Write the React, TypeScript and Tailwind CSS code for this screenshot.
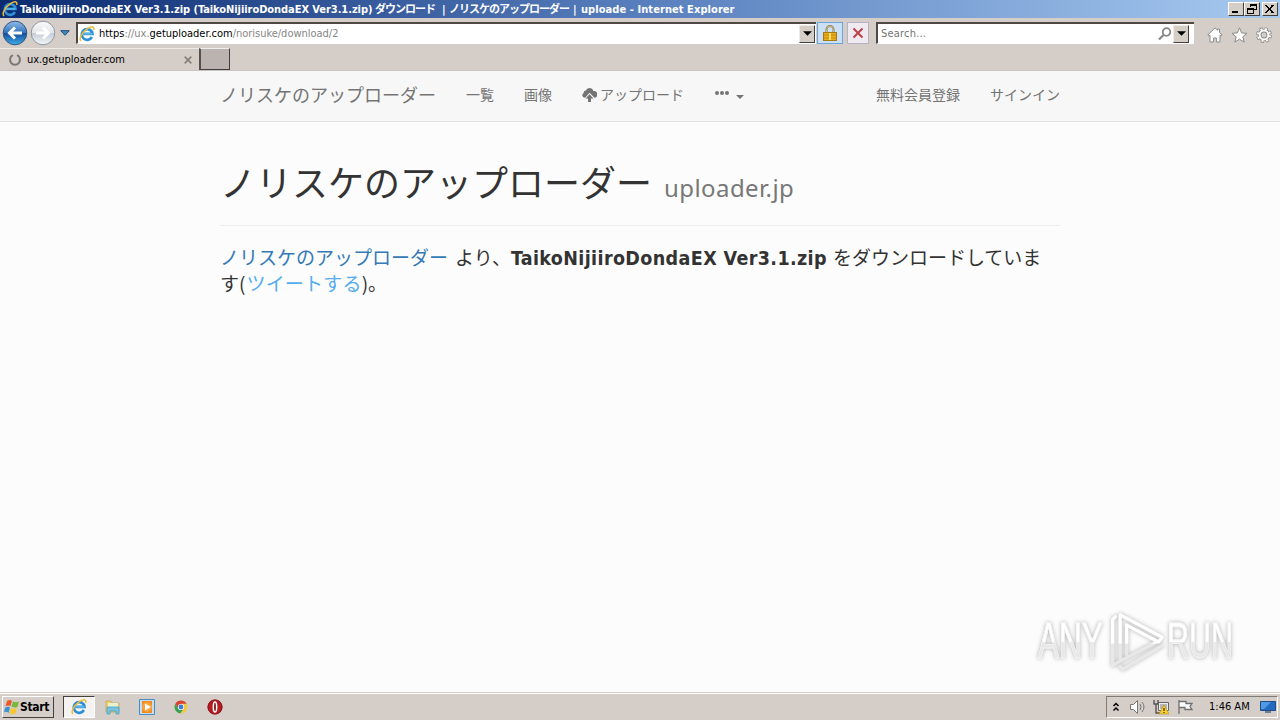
import type { ReactNode } from "react";

const UI = "font-['DejaVu_Sans_Condensed','DejaVu_Sans','Noto_Sans_CJK_JP',sans-serif] [font-stretch:condensed]";
const JP = "font-['Noto_Sans_CJK_JP',sans-serif]";

function IeLogo({ className }: { className: string }) {
  return (
    <svg viewBox="0 0 16 16" className={className}>
      <path d="M12.9 11a5.4 5.4 0 1 1 .6-3.1H4.2" fill="none" stroke="#2d8fd5" strokeWidth="2.7" />
      <path d="M4.2 7.9h9.2" stroke="#68c4f2" strokeWidth="1.2" />
      <path d="M2.2 14.8C-.8 13.3 3 6.7 7.8 3.2 12-.1 15.8-.1 14.6 4" fill="none" stroke="#eebc30" strokeWidth="1.5" />
    </svg>
  );
}

function Arrow({ className }: { className: string }) {
  return (
    <svg viewBox="0 0 8 4" className={className}>
      <path d="M0 0h8L4 4z" fill="currentColor" />
    </svg>
  );
}

function DropButton({ className }: { className: string }) {
  return (
    <span className={`flex items-center justify-center border border-t-[#eeeae4] border-l-[#eeeae4] border-r-[#44403d] border-b-[#44403d] bg-[#d5cec7] text-black ${className}`}>
      <Arrow className="h-[5px] w-[9px]" />
    </span>
  );
}

function WindowButton({ children, className = "" }: { children: ReactNode; className?: string }) {
  return (
    <span className={`flex h-[14px] w-4 items-center justify-center border border-t-white border-l-white border-r-[#404040] border-b-[#404040] bg-[#d5cec7] ${className}`}>
      <svg viewBox="0 0 12 10" className="h-[10px] w-3" fill="none" stroke="#000" shapeRendering="crispEdges">
        {children}
      </svg>
    </span>
  );
}

function TitleBar() {
  return (
    <header className={`flex h-[18px] shrink-0 items-center bg-linear-to-r from-[#0c2a70] via-[#587fbd] to-[#a7caf0] pl-[2px] text-[11px] font-bold leading-[18px] whitespace-pre text-white ${UI}`}>
      <IeLogo className="mr-[2px] h-4 w-4 shrink-0" />
      <span className="w-[355px] shrink-0 pt-[2px] tracking-[-0.06px]">TaikoNijiiroDondaEX Ver3.1.zip (TaikoNijiiroDondaEX Ver3.1.zip)</span>
      <span className="w-[67px] shrink-0 pt-[2px] tracking-[-1px]">ダウンロード</span>
      <span className="w-[7px] shrink-0 pt-px">|</span>
      <span className="w-[124px] shrink-0 pt-[2px] tracking-[-1px]">ノリスケのアップローダー</span>
      <span className="w-[8px] shrink-0 pt-px">|</span>
      <span className="shrink-0 pt-[2px] tracking-[0.07px]">uploade - Internet Explorer</span>
      <span className="ml-auto flex pr-[2px]">
        <WindowButton><path d="M2 8h6" strokeWidth="2" /></WindowButton>
        <WindowButton className="mr-[2px]">
          <path d="M4.500 3V.5h6v5H8M4 1.500h7M1.500 4.500h6v5h-6zM1 5.500h7" />
        </WindowButton>
        <WindowButton><path d="M2 1l7 8M9 1L2 9" strokeWidth="1.6" /></WindowButton>
      </span>
    </header>
  );
}

function NavCircle({ forward = false }: { forward?: boolean }) {
  return (
    <svg viewBox="0 0 26 26" className="h-[26px] w-[26px]">
      <defs>
        <linearGradient id={forward ? "fwd" : "back"} x2="0" y2="1">
          <stop stopColor={forward ? "#fafafa" : "#92bde9"} />
          <stop offset=".48" stopColor={forward ? "#e4e6ea" : "#3474bd"} />
          <stop offset=".5" stopColor={forward ? "#c3cad4" : "#134a96"} />
          <stop offset="1" stopColor={forward ? "#f4f8fb" : "#3faeea"} />
        </linearGradient>
      </defs>
      <circle cx="13" cy="13" r="11.800" fill={forward ? "url(#fwd)" : "url(#back)"} stroke={forward ? "#8e959f" : "#34537e"} />
      <path
        d={forward ? "M6 13h12M13 7.500l5.500 5.500-5.500 5.500" : "M20 13H8M13 7.500L7.500 13l5.500 5.500"}
        fill="none" stroke="#fff" strokeWidth="3"
      />
    </svg>
  );
}

function AddressBar() {
  return (
    <div className={`flex h-[30px] shrink-0 items-start bg-[#d5cec8] pt-1 pl-[2px] text-[11px] ${UI}`}>
      <div className="-mt-[2px] flex items-center">
        <NavCircle />
        <span className="ml-[2px] flex"><NavCircle forward /></span>
        <svg viewBox="0 0 10 6" className="ml-1 h-[6px] w-[10px]">
          <path d="M.7.7h8.600L5 5.300z" fill="#3c88c4" stroke="#244c75" />
        </svg>
      </div>
      <div className="ml-[6px] flex h-[22px] w-[740px] items-center border-t-2 border-b border-l-2 border-[#504845] border-b-white bg-white">
        <IeLogo className="ml-px h-4 w-4" />
        <span className="ml-1 pt-[2px] tracking-[-0.02px] text-[#858585]">
          <span className="text-black">https</span>://ux.<span className="text-black">getuploader.com</span>/norisuke/download/2
        </span>
        <DropButton className="mr-px ml-auto h-[18px] w-4" />
      </div>
      <span className="ml-px flex h-[22px] w-[26px] items-center justify-center border border-[#6aa5dc] bg-[#c9e0f7]">
        <svg viewBox="0 0 14 16" className="h-4 w-[14px]">
          <path d="M3.500 8V4.500a3.500 3.500 0 0 1 7 0V8" fill="none" stroke="#8b7850" strokeWidth="2" />
          <path d="M3.500 8V4.500a3.500 3.500 0 0 1 7 0V8" fill="none" stroke="#e6d599" strokeWidth=".7" />
          <rect x=".5" y="7.500" width="13" height="8" fill="#e9ae18" stroke="#a57818" />
          <path d="M1 10h12M1 13h12" stroke="#c98909" />
          <path d="M7 8v7" stroke="#f8de6c" strokeWidth="2" />
        </svg>
      </span>
      <span className="ml-1 flex h-[22px] w-[22px] items-center justify-center border border-[#b4b3c3] bg-[#eeeaf0]">
        <svg viewBox="0 0 12 12" className="h-3 w-3"><path d="M1.500 1.500l9 9M10.500 1.500l-9 9" stroke="#be4148" strokeWidth="2" /></svg>
      </span>
      <div className="ml-[7px] flex h-[22px] w-[318px] items-center border-t-2 border-b border-l-2 border-[#504845] border-b-white bg-white pr-[5px] text-[#747474]">
        <span className="ml-[3px] pt-[2px] tracking-[0.2px]">Search...</span>
        <svg viewBox="0 0 14 14" className="ml-auto mr-px h-[14px] w-[14px]" fill="none" stroke="#858585">
          <circle cx="8.500" cy="5" r="3.800" strokeWidth="1.800" /><path d="M5.500 8L1 12.500" strokeWidth="2.200" />
        </svg>
        <DropButton className="h-[18px] w-4" />
      </div>
      <div className="mt-[5px] ml-[13px] flex gap-2">
        <svg viewBox="0 0 16 16" className="h-4 w-4"><path d="M8 .8L.8 8l1.200 1.200L3 8.300V15h3.600v-4h2.800v4H13V8.300l1 .9L15.200 8 12.500 5.300V2h-2v1.300z" fill="#fff" stroke="#8b8b8b" /></svg>
        <svg viewBox="0 0 17 16" className="h-4 w-[17px]"><path d="M8.500.8l2.100 5.100 5.400.4-4.200 3.500 1.400 5.300-4.700-2.900-4.700 2.900 1.400-5.300L1 6.300l5.400-.4z" fill="#fff" stroke="#8b8b8b" /></svg>
        <svg viewBox="0 0 16 16" className="h-4 w-4" fill="none">
          <circle cx="8" cy="8" r="6.400" stroke="#858585" strokeWidth="3" strokeDasharray="2.900 2.127" />
          <circle cx="8" cy="8" r="4.400" stroke="#858585" strokeWidth="3.800" />
          <circle cx="8" cy="8" r="6.100" stroke="#fff" strokeWidth="2" strokeDasharray="1.900 2.891" strokeDashoffset="-.4" />
          <circle cx="8" cy="8" r="4.400" stroke="#fff" strokeWidth="2" />
        </svg>
      </div>
    </div>
  );
}

function TabBar() {
  return (
    <div className={`flex h-[23px] shrink-0 items-start border-b border-[#c9c6c2] bg-[#d5cec8] text-[11px] ${UI}`}>
      <div className="flex h-[22px] w-[199px] items-center border-t border-[#eeeae7] pl-2">
        <svg viewBox="0 0 14 14" className="h-[14px] w-[14px]"><path d="M5 2.200A5 5 0 1 0 9 2.200" fill="none" stroke="#777" strokeWidth="2" /></svg>
        <span className="ml-[5px] pt-[2px] tracking-[-0.05px]">ux.getuploader.com</span>
        <svg viewBox="0 0 8 8" className="mr-[7px] ml-auto h-2 w-2"><path d="M.7.7l6.600 6.600M7.300.7L.7 7.300" stroke="#85807c" strokeWidth="1.700" /></svg>
      </div>
      <div className="h-[22px] w-[31px] border border-t-[#eee] border-l-2 border-l-[#55504d] border-r-[#413d3a] border-b-[#413d3a] bg-[#bbb3af]" />
    </div>
  );
}

function SiteNav() {
  return (
    <nav className={`h-[51px] shrink-0 border-b border-[#e2e2e2] bg-[#f7f7f7] text-[14px] text-[#747474] ${JP}`}>
      <div className="mx-auto flex h-[46px] w-[840px] items-center leading-5">
        <a className="w-[246px] text-[18px]">ノリスケのアップローダー</a>
        <a className="w-[58px]">一覧</a>
        <a className="w-[58px]">画像</a>
        <a className="flex w-[133px] items-center">
          <svg viewBox="0 0 15 14" className="mt-px mr-[3px] h-[14px] w-[15px]" fill="currentColor">
            <path d="M3 9.800A2.500 2.500 0 0 1 1.500 5.200 2.700 2.700 0 0 1 3.800 2.600 4 4 0 0 1 11.400 3.100 3 3 0 0 1 12.500 9.800L7.500 4.800 3.300 9.500z" />
            <path d="M7.500 6.300l4 4.200H9V14H6v-3.500H3.500z" />
          </svg>
          アップロード
        </a>
        <a className="flex items-center">
          <svg viewBox="0 0 14 4" className="mb-[2px] h-1 w-[14px]" fill="currentColor">
            <circle cx="2" cy="2" r="2" /><circle cx="7" cy="2" r="2" /><circle cx="12" cy="2" r="2" />
          </svg>
          <Arrow className="mt-[5px] ml-[7px] h-1 w-2" />
        </a>
        <a className="ml-auto">無料会員登録</a>
        <a className="ml-[30px]">サインイン</a>
      </div>
    </nav>
  );
}

function Watermark() {
  return (
    <div className="absolute top-[536px] left-[1038px] flex h-[68px] w-[200px] items-center font-['Liberation_Sans_Narrow','Liberation_Sans',sans-serif] text-[50px] leading-[68px] drop-shadow-[0_0_2px_rgba(0,0,0,0.3)]">
      <span className="mr-[-34px] w-[104px] shrink-0 origin-left scale-x-[0.63] bg-linear-to-b from-white from-52% to-[#e8e8e8] to-52% bg-clip-text text-transparent [-webkit-text-stroke:0.8px_#f4f4f4]">ANY</span>
      <svg viewBox="0 0 62 68" className="h-[68px] w-[58px] shrink-0" fill="none" strokeWidth="3.500" strokeLinejoin="round" strokeLinecap="round">
        <defs><linearGradient id="mark" x2="0" y2="1"><stop offset=".52" stopColor="#fff" /><stop offset=".54" stopColor="#e8e8e8" /></linearGradient></defs>
        <path d="M13 53V6l45 24-4 5-34-18M8 8L5 11v49l7-4 42-22M20 17v32M13 61l3 3 42-25" stroke="url(#mark)" />
      </svg>
      <span className="ml-px w-[112px] shrink-0 origin-left scale-x-[0.61] bg-linear-to-b from-white from-52% to-[#e8e8e8] to-52% bg-clip-text text-transparent [-webkit-text-stroke:0.8px_#f4f4f4]">RUN</span>
    </div>
  );
}

function Content() {
  return (
    <main className="relative flex min-h-0 flex-1 flex-col bg-[#fcfcfc]">
      <SiteNav />
      <div className={`mx-auto w-[840px] text-[#333] ${JP}`}>
        <h1 className="flex h-[104px] items-baseline border-b border-[#eeeeee] pt-[37px] text-[36px] leading-[44px] whitespace-nowrap">
          ノリスケのアップローダー
          <small className="ml-3 font-['Noto_Sans','Open_Sans',sans-serif] text-[24px] tracking-[0.43px] text-[#777]">uploader.jp</small>
        </h1>
        <p className="mt-[18px] text-[19px] leading-[26px] whitespace-nowrap">
          <a className="text-[#337ab7]">ノリスケのアップローダー</a>
          <span className="ml-[7px]">より、</span>
          <b className="font-['DejaVu_Sans_Condensed','DejaVu_Sans',sans-serif] text-[19.500px] leading-none font-bold tracking-[0.380px] [font-stretch:condensed]">TaikoNijiiroDondaEX Ver3.1.zip</b>
          <span className="ml-[6px]">をダウンロードしていま</span>
          <br />
          す<span className="mr-px">(</span><a className="tracking-[0.2px] text-[#55acee]">ツイートする</a>)。
        </p>
      </div>
      <Watermark />
    </main>
  );
}

function Taskbar() {
  return (
    <footer className={`flex h-[28px] shrink-0 items-center border-t border-[#d5cec8] bg-[#d5cec8] pl-[2px] text-[11px] shadow-[inset_0_1px_0_#fff] ${UI}`}>
      <button className="flex h-[22px] w-[52px] items-center border border-t-white border-l-white border-r-[#44403d] border-b-[#44403d] pl-px text-[12px] font-bold tracking-[-0.3px]">
        <svg viewBox="0 0 16 16" className="h-4 w-4 shrink-0">
          <path d="M3 2q3-2 5 0L6.500 7q-3-1-5 .5z" fill="#e75b2c" />
          <path d="M9 2.500q3 1.500 6 0L13.500 8q-3 1-6-.5z" fill="#75b83b" />
          <path d="M1 9q3-2 5-.500L4.500 14q-2-2-4.500-.5z" fill="#3c91d5" />
          <path d="M7 9q3 1.500 6 0L11.500 14.500q-3 1-6-.500z" fill="#f8c72e" />
        </svg>
        Start
      </button>
      <span className="ml-[9px] flex h-[22px] w-[32px] items-center justify-center border border-t-[#44403d] border-l-[#44403d] border-r-white border-b-white bg-[#f5f3f2]"><IeLogo className="h-4 w-4" /></span>
      <svg viewBox="0 0 16 16" className="ml-[10px] h-4 w-4">
        <path d="M1 2h5l1 2h7v9H1z" fill="#edcf72" stroke="#c7a34c" strokeWidth=".7" />
        <path d="M3 4h10v4H3z" fill="#e8f2d1" /><path d="M2 8h12v7h-3v-3H5v3H2z" fill="#79c3dc" stroke="#3b9fc5" strokeWidth=".7" />
      </svg>
      <svg viewBox="0 0 16 16" className="ml-[18px] h-4 w-4">
        <path d="M.5.5h15v15H.5z" fill="#c6def0" stroke="#458dc4" /><path d="M3 2h10v12H3z" fill="#ef8920" />
        <circle cx="8" cy="8" r="5" fill="#f7a33b" /><path d="M6 4.500L12 8l-6 3.500z" fill="#fff" />
      </svg>
      <svg viewBox="0 0 16 16" className="ml-[18px] h-4 w-4">
        <circle cx="8" cy="8" r="6.500" fill="#f6c742" />
        <path d="M2.400 4.700A6.500 6.500 0 0 1 13.600 4.700H8L5.200 9.700z" fill="#d84335" />
        <path d="M2.400 4.700A6.500 6.500 0 0 0 7.200 14.450L10.700 9.700H5.200z" fill="#35a358" />
        <circle cx="8" cy="8" r="3.100" fill="#fff" /><circle cx="8" cy="8" r="2.400" fill="#3c7bd9" />
      </svg>
      <svg viewBox="0 0 16 16" className="ml-[18px] h-4 w-4">
        <circle cx="8" cy="8" r="7.500" fill="#b91920" /><circle cx="8" cy="8" r="7" fill="none" stroke="#861820" />
        <ellipse cx="8" cy="8" rx="1.700" ry="5" fill="#861820" stroke="#fff" strokeWidth="1.500" />
      </svg>
      <div className="mr-[2px] ml-auto flex h-[22px] w-[172px] items-center border border-t-[#817b75] border-l-[#817b75] border-r-white border-b-white pl-[5px]">
        <svg viewBox="0 0 8 10" className="h-[10px] w-2" fill="none" stroke="#000" strokeWidth="1.500"><path d="M1.500 4L4 1.500 6.500 4M1.500 8.500L4 6l2.500 2.500" /></svg>
        <svg viewBox="0 0 18 16" className="ml-[9px] h-4 w-[18px]" fill="none" stroke="#777">
          <path d="M1.500 5.500h3l4-4v13l-4-4h-3z" fill="#fff" /><path d="M11 5q2 3 0 6M13 3q4 5 0 10" />
        </svg>
        <svg viewBox="0 0 16 16" className="ml-[6px] h-4 w-4">
          <path d="M5.500 3.500h10v8h-10z" fill="#eeeeee" stroke="#666" /><path d="M7 5h7v5H7z" fill="#b6b6b6" />
          <path d="M1 1v4h4V1M3 5v9h5" fill="none" stroke="#555" strokeWidth="1.400" />
          <path d="M11 6l5 9H6z" fill="#fbd32d" stroke="#ba9315" strokeWidth=".7" /><path d="M11 9v3M11 13v1" stroke="#403205" strokeWidth="1.300" />
        </svg>
        <svg viewBox="0 0 17 16" className="ml-2 h-4 w-[17px]"><path d="M2 1v14M2 2.500h7v2h6l-2 3 2 3H8v-2H2" fill="#fff" stroke="#6f6f6f" strokeWidth="1.300" /></svg>
        <span className="ml-[15px] pt-px whitespace-nowrap">1:46 AM</span>
        <svg viewBox="0 0 16 14" className="mr-px ml-auto h-[14px] w-4">
          <path d="M.5 1.500h15v9H.5z" fill="#236bc0" stroke="#204c85" /><path d="M1 2h10L4 9H1z" fill="#4f9be3" /><path d="M5 11h6v2H5z" fill="#6a7e96" />
        </svg>
      </div>
    </footer>
  );
}

export default function App() {
  return (
    <div className="flex h-[720px] w-[1280px] flex-col overflow-hidden">
      <TitleBar />
      <AddressBar />
      <TabBar />
      <Content />
      <Taskbar />
    </div>
  );
}
